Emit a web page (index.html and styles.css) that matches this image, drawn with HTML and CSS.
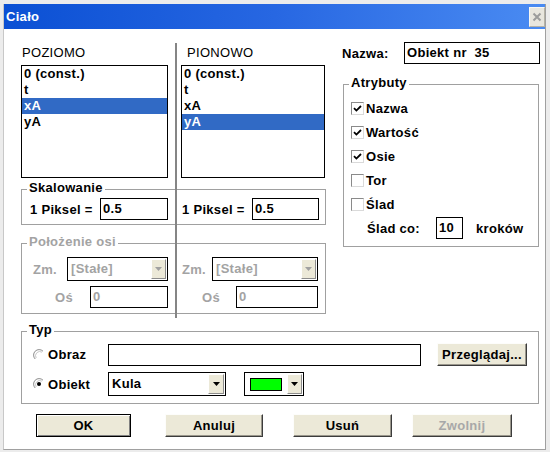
FILE: index.html
```html
<!DOCTYPE html>
<html lang="pl">
<head>
<meta charset="utf-8">
<title>Ciało</title>
<link rel="stylesheet" href="styles.css">
</head>
<body>
<div class="window">
  <div class="titlebar">
    <span class="title">Ciało</span>
    <span class="close"><svg width="10" height="10" viewBox="0 0 10 10"><path d="M1.5 1.5 L8.5 8.5 M8.5 1.5 L1.5 8.5" stroke="#9c9c9c" stroke-width="2"/></svg></span>
  </div>
  <div class="content">
    <div class="top">
      <div class="axes">
        <div class="sep"></div>
        <div class="colhead c1 r1">POZIOMO</div>
        <div class="colhead c3 r1">PIONOWO</div>
        <div class="listbox c1 r2">
          <div class="item">0 (const.)</div>
          <div class="item">t</div>
          <div class="item sel">xA</div>
          <div class="item">yA</div>
        </div>
        <div class="listbox c3 r2">
          <div class="item">0 (const.)</div>
          <div class="item">t</div>
          <div class="item">xA</div>
          <div class="item sel">yA</div>
        </div>
        <div class="group half-l scale-l c1 r3">
          <div class="legend">Skalowanie</div>
          <div class="row"><span class="lbl">1 Piksel =</span><span class="input push w-s1">0.5</span></div>
        </div>
        <div class="group half-r scale-r c3 r3">
          <div class="row"><span class="lbl">1 Piksel =</span><span class="input push w-s2">0.5</span></div>
        </div>
        <div class="group half-l axis-l dis c1 r4">
          <div class="legend">Położenie osi</div>
          <div class="row zm-row"><span class="lbl">Zm.</span><span class="combo push w-c1"><span class="ctext">[Stałe]</span><span class="dd"><svg width="7" height="4" viewBox="0 0 7 4"><path d="M0 0H7L3.5 4Z" fill="#a0a0a0"/></svg></span></span></div>
          <div class="row os-row"><span class="lbl os-l">Oś</span><span class="input push w-o1">0</span></div>
        </div>
        <div class="group half-r axis-r dis c3 r4">
          <div class="row"><span class="lbl">Zm.</span><span class="combo push w-c2"><span class="ctext">[Stałe]</span><span class="dd"><svg width="7" height="4" viewBox="0 0 7 4"><path d="M0 0H7L3.5 4Z" fill="#a0a0a0"/></svg></span></span></div>
          <div class="row os-row"><span class="lbl os-r">Oś</span><span class="input push w-o2">0</span></div>
        </div>
      </div>
      <div class="side">
        <div class="nazwa"><span>Nazwa:</span><span class="input push w-nazwa">Obiekt nr  35</span></div>
        <div class="group attrs">
          <div class="legend">Atrybuty</div>
          <div class="check first"><span class="cb"><svg width="9" height="9" viewBox="0 0 9 9"><path d="M1 4.2 L3.4 6.6 L8 2" stroke="#000" stroke-width="1.8" fill="none"/></svg></span>Nazwa</div>
          <div class="check"><span class="cb"><svg width="9" height="9" viewBox="0 0 9 9"><path d="M1 4.2 L3.4 6.6 L8 2" stroke="#000" stroke-width="1.8" fill="none"/></svg></span>Wartość</div>
          <div class="check"><span class="cb"><svg width="9" height="9" viewBox="0 0 9 9"><path d="M1 4.2 L3.4 6.6 L8 2" stroke="#000" stroke-width="1.8" fill="none"/></svg></span>Osie</div>
          <div class="check"><span class="cb"></span>Tor</div>
          <div class="check"><span class="cb"></span>Ślad</div>
          <div class="slad"><span class="slad-l">Ślad co:</span><span class="input w-10">10</span><span class="krokow">kroków</span></div>
        </div>
      </div>
    </div>
    <div class="group typ">
      <div class="legend">Typ</div>
      <div class="row typ-r1">
        <span class="radio-l"><svg class="radio" width="12" height="12" viewBox="0 0 12 12"><circle cx="6" cy="6" r="5.5" fill="#fff"/><path d="M10 2.2 A5.3 5.3 0 0 0 2.2 10" stroke="#8c8c8c" fill="none"/><path d="M9 3.2 A4.2 4.2 0 0 0 3.2 9" stroke="#c8c8c8" fill="none"/></svg>Obraz</span>
        <span class="input w-obraz"></span>
        <button class="btn btn-browse">Przeglądaj...</button>
      </div>
      <div class="row typ-r2">
        <span class="radio-l"><svg class="radio" width="12" height="12" viewBox="0 0 12 12"><circle cx="6" cy="6" r="5.5" fill="#fff"/><path d="M10 2.2 A5.3 5.3 0 0 0 2.2 10" stroke="#8c8c8c" fill="none"/><path d="M9 3.2 A4.2 4.2 0 0 0 3.2 9" stroke="#c8c8c8" fill="none"/><circle cx="6" cy="6" r="2" fill="#000"/></svg>Obiekt</span>
        <span class="combo w-kula"><span class="ctext">Kula</span><span class="dd"><svg width="7" height="4" viewBox="0 0 7 4"><path d="M0 0H7L3.5 4Z" fill="#000"/></svg></span></span>
        <span class="combo colorc"><span class="swatch"></span><span class="dd"><svg width="7" height="4" viewBox="0 0 7 4"><path d="M0 0H7L3.5 4Z" fill="#000"/></svg></span></span>
      </div>
    </div>
    <div class="buttons">
      <button class="btn b-ok">OK</button>
      <button class="btn b-cancel">Anuluj</button>
      <button class="btn b-del">Usuń</button>
      <button class="btn b-free" disabled>Zwolnij</button>
    </div>
  </div>
</div>
</body>
</html>
```

FILE: styles.css
```css
* { box-sizing: border-box; }
html, body { margin: 0; }
body {
  width: 550px;
  height: 452px;
  overflow: hidden;
  background: #ececec;
  font-family: "Liberation Sans", Arial, sans-serif;
  font-size: 13px;
  letter-spacing: 0.3px;
  color: #000;
}
.window {
  margin: 4px 0 0 3px;
  width: 543px;
  height: 446px;
  background: #fff;
  border-left: 1px solid #c8c8c8;
  border-right: 1px solid #a0a0a0;
  border-bottom: 1px solid #a0a0a0;
}
.titlebar {
  height: 25px;
  display: flex;
  align-items: center;
  padding-left: 2px;
  background: linear-gradient(90deg, #0b50d4 0%, #2767e2 50%, #4a8bf2 100%);
  color: #fff;
  font-weight: bold;
}
.close {
  margin-left: auto;
  width: 16px;
  height: 20px;
  background: #e8e6de;
  border: 1px solid;
  border-color: #f8f7f2 #b5b2a6 #b5b2a6 #f8f7f2;
  display: flex;
  align-items: center;
  justify-content: center;
}
.content { padding: 13px 0 0 17px; }
.top { display: flex; align-items: flex-start; }

/* axes area */
.axes {
  margin-top: 1px;
  display: grid;
  grid-template-columns: 154px 2px 149px;
}
.sep { grid-column: 2; grid-row: 1 / 5; background: #858585; }
.c1 { grid-column: 1; }
.c3 { grid-column: 3; }
.r1 { grid-row: 1; }
.r2 { grid-row: 2; }
.r3 { grid-row: 3; }
.r4 { grid-row: 4; }
.colhead { height: 22px; padding-top: 2px; line-height: 16px; }
.colhead.c1 { padding-left: 1px; }
.colhead.c3 { padding-left: 10px; }
.listbox {
  height: 113px;
  border: 1px solid #000;
  font-weight: bold;
  line-height: 16px;
  background: #fff;
}
.listbox.c1 { width: 147px; }
.listbox.c3 { width: 144px; margin-left: 4px; }
.item { height: 16px; padding-left: 2px; }
.item.sel { background: #316ac5; color: #fff; }

/* group boxes */
.group { border: 1px solid #a0a0a0; }
.legend {
  width: fit-content;
  height: 16px;
  margin: -10px 0 0 5px;
  padding: 0 2px;
  line-height: 16px;
  background: #fff;
  font-weight: bold;
}
.half-l { border-right: none; }
.half-r { border-left: none; }
.row { display: flex; align-items: center; }
.lbl { font-weight: bold; }
.push { margin-left: auto; }
.dis { color: #a3a3a3; }

.scale-l, .scale-r { margin-top: 11px; padding-bottom: 4px; }
.scale-l .row { height: 22px; margin-top: 2px; padding: 0 7px 0 8px; }
.scale-r { padding-top: 8px; }
.scale-r .row { height: 22px; padding: 0 6px 0 5px; }

.axis-l, .axis-r { margin-top: 18px; margin-bottom: 4px; padding-bottom: 5px; }
.axis-r { padding-top: 13px; }
.axis-l .row { padding: 0 7px 0 11px; }
.axis-r .row { padding: 0 7px 0 5px; }
.axis-l .zm-row { margin-top: 7px; }
.os-row { margin-top: 5px; }
.os-l { padding-left: 22px; }
.os-r { padding-left: 20px; }

/* inputs */
.input {
  display: block;
  height: 22px;
  border: 1px solid #000;
  background: #fff;
  padding-left: 2px;
  line-height: 20px;
  font-weight: bold;
  white-space: pre;
}
.w-s1 { width: 68px; }
.w-s2 { width: 67px; }
.w-o1 { width: 78px; }
.w-o2 { width: 82px; }
.w-nazwa { width: 136px; }
.w-10 { width: 27px; }
.w-obraz { width: 313px; }

.combo {
  display: flex;
  height: 24px;
  border: 1px solid #000;
  padding: 1px;
  background: #fff;
}
.ctext { flex: 1; padding-left: 2px; line-height: 20px; font-weight: bold; }
.dd {
  width: 15px;
  margin-left: auto;
  background: #ece9d8;
  border: 1px solid;
  border-color: #fff #8c8c8c #8c8c8c #fff;
  display: flex;
  align-items: center;
  justify-content: center;
}
.w-c1 { width: 101px; }
.w-c2 { width: 106px; }
.w-kula { width: 118px; }
.w-kula .dd { width: 16px; }
.colorc { width: 60px; margin-left: 18px; align-items: center; padding-left: 5px; }
.colorc .dd { height: 20px; }
.swatch { width: 32px; height: 13px; border: 1px solid #000; background: #00ff00; }

/* side */
.side { margin-left: 16px; width: 198px; }
.nazwa { display: flex; align-items: center; height: 22px; font-weight: bold; }
.attrs { margin: 20px 0 0 1px; width: 196px; padding-bottom: 7px; }
.check {
  display: flex;
  align-items: center;
  height: 24px;
  padding-left: 7px;
  font-weight: bold;
}
.check.first { margin-top: 5px; }
.cb {
  width: 13px;
  height: 13px;
  margin-right: 2px;
  border: 1px solid;
  border-color: #8a8a8a #dadada #dadada #8a8a8a;
  background: #fff;
  display: flex;
  align-items: center;
  justify-content: center;
}
.slad {
  display: flex;
  align-items: center;
  margin-top: 1px;
  padding-left: 23px;
  font-weight: bold;
}
.slad-l { width: 69px; }
.krokow { margin-left: 13px; }

/* typ */
.typ { margin-top: 13px; width: 518px; padding-bottom: 7px; }
.typ .row { padding-left: 11px; }
.typ-r1 { margin-top: 5px; height: 23px; }
.typ-r2 { margin-top: 6px; height: 24px; }
.radio-l { width: 75px; display: flex; align-items: center; font-weight: bold; }
.radio { margin-right: 3px; }

/* buttons */
.btn {
  height: 23px;
  padding: 0;
  background: #ece9d8;
  border: 1px solid;
  border-color: #fdfdfb #3c3c3c #3c3c3c #fdfdfb;
  box-shadow: inset -1px -1px 0 #9a978c;
  font-family: "Liberation Sans", Arial, sans-serif;
  font-size: 13px;
  font-weight: bold;
  letter-spacing: 0.3px;
  color: #000;
  display: flex;
  align-items: center;
  justify-content: center;
}
.btn-browse { margin-left: 16px; width: 90px; }
.buttons { display: flex; margin-top: 10px; padding-left: 15px; }
.b-ok { width: 95px; border-color: #000; box-shadow: inset 1px 1px 0 #fff, inset -1px -1px 0 #808080; }
.b-cancel { width: 98px; margin-left: 34px; }
.b-del { width: 99px; margin-left: 30px; }
.b-free { width: 100px; margin-left: 20px; color: #a8a8a8; }
```
